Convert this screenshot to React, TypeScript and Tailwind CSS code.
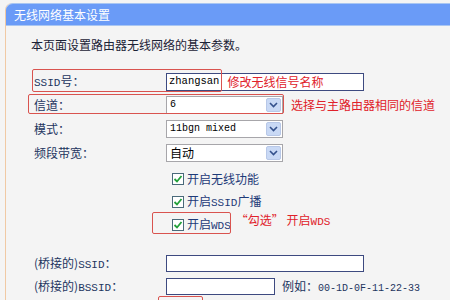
const cjk = "font-['Noto_Sans_CJK_SC','Noto_Sans',sans-serif]";
const mono = "font-['Liberation_Mono','Noto_Sans_CJK_SC',monospace]";

function Lat({ children }: { children: React.ReactNode }) {
  return <span className={`${mono} text-[11px]`}>{children}</span>;
}

function Select({ value, latin }: { value: string; latin?: boolean }) {
  return (
    <div className="flex h-[18px] w-[117px] items-center border border-[#a7a6aa] bg-white">
      <span className={`flex-1 pl-[3px] text-[12px] text-black ${latin ? `${mono} !text-[10px]` : ""}`}>
        {value}
      </span>
      <div className="mr-[1px] flex h-[14px] w-[15px] items-center justify-center rounded-[2px] border border-[#b8c8e8] bg-[#c9d9f5]">
        <svg width="9" height="6" viewBox="0 0 9 6">
          <path d="M1 1 L4.5 4.5 L8 1" fill="none" stroke="#34518c" strokeWidth="1.6" />
        </svg>
      </div>
    </div>
  );
}

function Check({ children }: { children: React.ReactNode }) {
  return (
    <div className="flex h-[23px] items-center pl-[138px]">
      <svg width="12" height="12" viewBox="0 0 12 12" className="shrink-0">
        <rect x="0.5" y="0.5" width="11" height="11" fill="#fff" stroke="#4a6a7a" />
        <path d="M2.5 6 L5 8.5 L9.5 3" fill="none" stroke="#23a03a" strokeWidth="1.8" />
      </svg>
      <span className="ml-[3px] text-[12px] text-[#1e3a78]">{children}</span>
    </div>
  );
}

function Row({ label, children }: { label: React.ReactNode; children: React.ReactNode }) {
  return (
    <div className="flex h-[23px] items-center">
      <div className="w-[132px] text-[12px] text-[#23355f]">{label}</div>
      {children}
    </div>
  );
}

export default function App() {
  return (
    <div className={`h-[300px] w-[450px] overflow-hidden bg-[#f4f4f4] pl-[5px] pt-[3px] ${cjk}`}>
      <div className="h-full rounded-tl-[7px] border-l border-[#f0c9a4] bg-[#f4f4f4]">
        <div className="flex h-[23px] items-center rounded-tl-[7px] border-y border-[#a9c6f2] bg-[#6a9bf7] pl-[8px] text-[12px] text-white">
          无线网络基本设置
        </div>

        <div className="relative pl-[28px] pt-[11px]">
          <div className="-ml-[3px] flex h-[16px] items-center text-[12px] text-[#1b2236]">
            本页面设置路由器无线网络的基本参数。
          </div>

          <div className="mt-[17px]">
            <Row label={<><Lat>SSID</Lat>号：</>}>
              <div className="flex h-[18px] w-[198px] items-center border border-[#3d4a80] bg-white pl-[2px]">
                <span className={`${mono} text-[10.5px] text-black`}>zhangsan</span>
                <span className="ml-[8px] text-[12px] text-[#e0212a]">修改无线信号名称</span>
              </div>
            </Row>
            <Row label="信道：">
              <Select value="6" latin />
              <span className="ml-[8px] text-[12px] text-[#e0212a]">选择与主路由器相同的信道</span>
            </Row>
            <div className="h-[1px]" />
            <Row label="模式：">
              <Select value="11bgn mixed" latin />
            </Row>
            <div className="h-[1px]" />
            <Row label="频段带宽：">
              <Select value="自动" />
            </Row>
          </div>

          <div className="mt-[3px]">
            <Check>开启无线功能</Check>
            <Check>
              开启<Lat>SSID</Lat>广播
            </Check>
            <div className="flex items-center">
              <Check>
                开启<Lat>WDS</Lat>
              </Check>
              <span className="ml-[5px] mt-[-8px] text-[12px] text-[#e0212a]">
                “勾选” 开启<Lat>WDS</Lat>
              </span>
            </div>
          </div>

          <div className="mt-[16px]">
            <Row label={<>(桥接的)<Lat>SSID</Lat>：</>}>
              <div className="h-[17px] w-[198px] border border-[#3d4a80] bg-white" />
            </Row>
            <Row label={<>(桥接的)<Lat>BSSID</Lat>：</>}>
              <div className="h-[17px] w-[109px] border border-[#3d4a80] bg-white" />
              <span className="ml-[7px] text-[12px] text-[#23355f]">
                例如：<span className={`${mono} text-[10px]`}>00-1D-0F-11-22-33</span>
              </span>
            </Row>
          </div>

          {/* red annotation boxes */}
          <div className="pointer-events-none absolute left-[26px] top-[43px] h-[23px] w-[190px] rounded-[2px] border-[1.5px] border-[#d9534f]" />
          <div className="pointer-events-none absolute left-[22px] top-[68px] h-[20px] w-[256px] rounded-[2px] border-[1.5px] border-[#d9534f]" />
          <div className="pointer-events-none absolute left-[146px] top-[186px] h-[22px] w-[79px] rounded-[2px] border-[1.5px] border-[#d9534f]" />
          <div className="pointer-events-none absolute left-[152px] top-[270px] h-[20px] w-[45px] rounded-[2px] border-[1.5px] border-[#d9534f]" />
        </div>
      </div>
    </div>
  );
}
